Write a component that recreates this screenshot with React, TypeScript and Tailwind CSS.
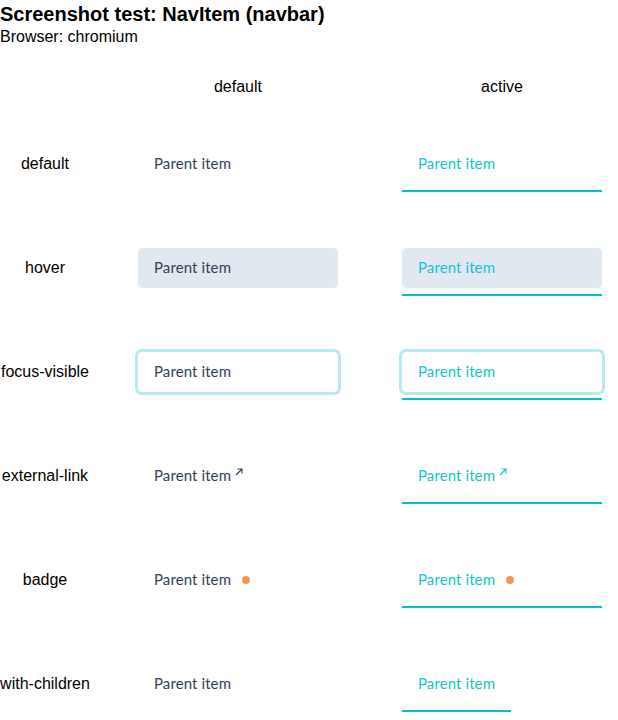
import React from "react";

type Variant = "default" | "hover" | "focus" | "external" | "badge" | "children";

const rows: { label: string; variant: Variant }[] = [
  { label: "default", variant: "default" },
  { label: "hover", variant: "hover" },
  { label: "focus-visible", variant: "focus" },
  { label: "external-link", variant: "external" },
  { label: "badge", variant: "badge" },
  { label: "with-children", variant: "children" },
];

const NavItem = ({ variant, active }: { variant: Variant; active: boolean }) => {
  const box =
    variant === "hover"
      ? "bg-[#e2e8f0]"
      : variant === "focus"
      ? "outline outline-[3px] outline-[#b7eaed] outline-offset-0"
      : "";
  const width = variant === "children" ? "w-[109px]" : "w-[200px]";

  return (
    <div className={`flex flex-col ${width}`}>
      <div
        className={`flex h-10 items-center whitespace-nowrap rounded-[4px] px-4 pb-[1px] font-['Lato'] text-[15px] tracking-[0.1px] ${box} ${
          active ? "text-[#14c3d4]" : "text-[#334155]"
        }`}
      >
        <span>Parent item</span>
        {variant === "external" && (
          <svg className="ml-[4px] mb-[7px]" width="8" height="8" viewBox="0 0 8 8" fill="none">
            <path d="M1 7L7 1M2.5 1H7V5.5" stroke="currentColor" strokeWidth="1.1" />
          </svg>
        )}
        {variant === "badge" && <span className="ml-[11px] h-2 w-2 rounded-full bg-[#f4994a]" />}
      </div>
      <div className={`mt-[6px] h-[2px] ${active ? "bg-[#00bfcf]" : ""}`} />
    </div>
  );
};

const App = () => {
  return (
    <div className="w-[618px] font-['Liberation_Sans',Arial,sans-serif] text-black">
      <h1 className="text-[20px] font-bold leading-[28px]">Screenshot test: NavItem (navbar)</h1>
      <p className="text-[16px] leading-[18px]">Browser: chromium</p>
      <div className="grid grid-cols-[90px_296px_232px]">
        <div className="h-[74px]" />
        <div className="pt-[32px] text-center text-[16px] leading-[18px]">default</div>
        <div className="pt-[32px] text-center text-[16px] leading-[18px]">active</div>
        {rows.map((row) => (
          <React.Fragment key={row.label}>
            <div className="flex h-[104px] justify-center pt-[24px]">
              <span className="flex h-10 items-center text-[16px]">{row.label}</span>
            </div>
            <div className="h-[104px] pl-[48px] pt-[24px]">
              <NavItem variant={row.variant} active={false} />
            </div>
            <div className="h-[104px] pl-[16px] pt-[24px]">
              <NavItem variant={row.variant} active={true} />
            </div>
          </React.Fragment>
        ))}
      </div>
    </div>
  );
};

export default App;
